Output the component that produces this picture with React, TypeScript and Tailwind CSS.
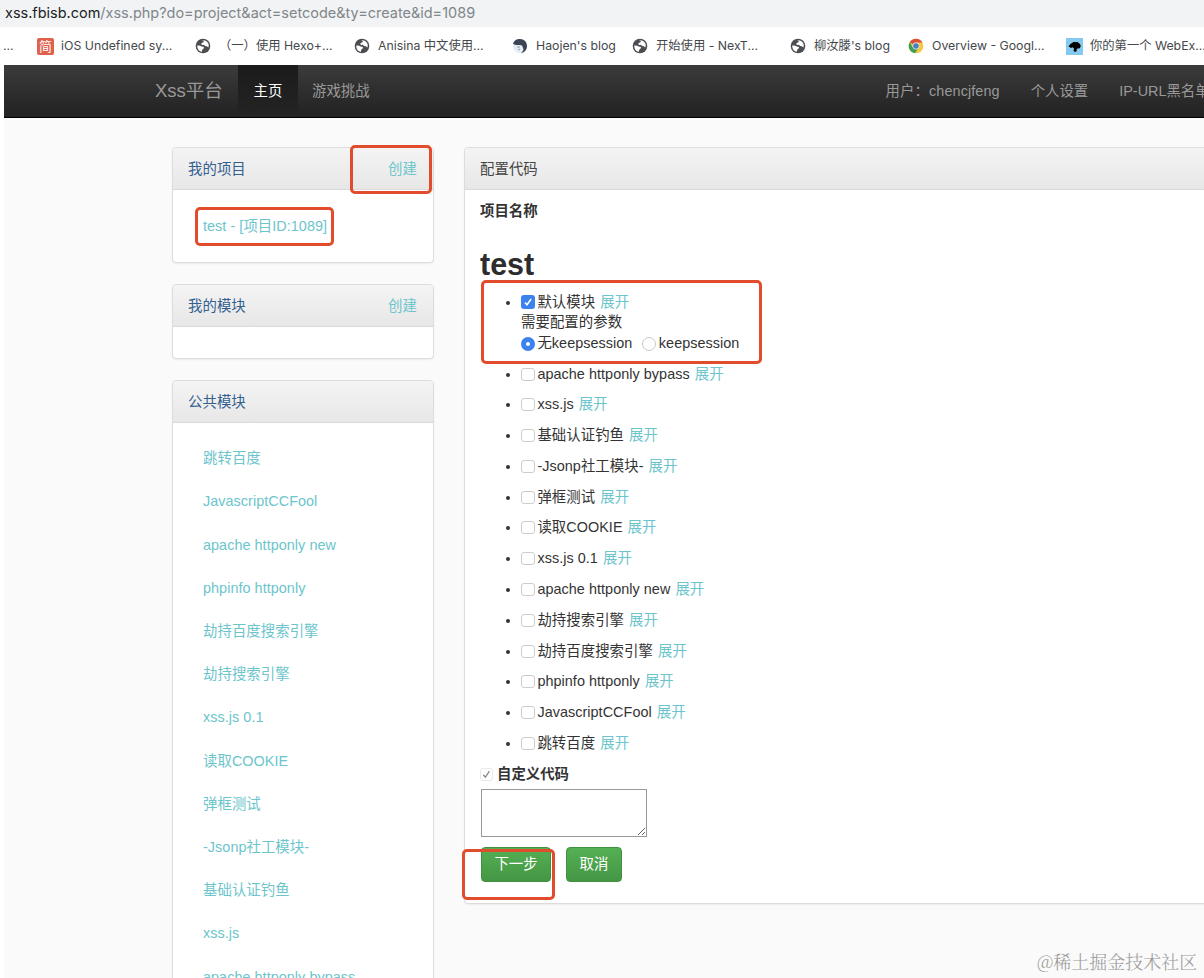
import type { ReactNode } from "react";
import clsx from "clsx";

interface Bookmark {
  title: string;
  icon: ReactNode;
  cell: string;
}

const bookmarks: Bookmark[] = [
  {
    title: "iOS Undefined sy...",
    icon: (
      <span className="flex h-[17px] w-[17px] items-center justify-center rounded-[2px] bg-[#e0604c] text-[13px] leading-none text-white">
        简
      </span>
    ),
    cell: "w-[158px]",
  },
  { title: "（一）使用 Hexo+...", icon: <GlobeIcon />, cell: "w-[159px]" },
  { title: "Anisina 中文使用...", icon: <GlobeIcon />, cell: "w-[158px]" },
  { title: "Haojen's blog", icon: <HaojenIcon />, cell: "w-[120px]" },
  { title: "开始使用 - NexT...", icon: <GlobeIcon />, cell: "w-[158px]" },
  { title: "柳汝滕's blog", icon: <GlobeIcon />, cell: "w-[118px]" },
  { title: "Overview - Googl...", icon: <ChromeIcon />, cell: "w-[158px]" },
  { title: "你的第一个 WebEx...", icon: <WebExIcon />, cell: "w-[138px]" },
];

const publicModules = [
  "跳转百度",
  "JavascriptCCFool",
  "apache httponly new",
  "phpinfo httponly",
  "劫持百度搜索引擎",
  "劫持搜索引擎",
  "xss.js 0.1",
  "读取COOKIE",
  "弹框测试",
  "-Jsonp社工模块-",
  "基础认证钓鱼",
  "xss.js",
  "apache httponly bypass",
];

const modules = [
  "apache httponly bypass",
  "xss.js",
  "基础认证钓鱼",
  "-Jsonp社工模块-",
  "弹框测试",
  "读取COOKIE",
  "xss.js 0.1",
  "apache httponly new",
  "劫持搜索引擎",
  "劫持百度搜索引擎",
  "phpinfo httponly",
  "JavascriptCCFool",
  "跳转百度",
];

function GlobeIcon() {
  return (
    <svg viewBox="0 0 16 16" className="mr-px h-4 w-4">
      <circle cx="8" cy="8" r="7.3" fill="#4b4d50" />
      <path d="M2.3 7.6c1.6-.2 3.2.2 4.2 1l1.7.2c1 .3 1 1.4.2 1.9l-1.2 1-.5 2.2C4 13.4 2 11 2.3 7.6z" fill="#fff" />
      <path d="M7 2.3c2.7-.5 5 .8 6.2 2.9.7 1.4.7 3 .2 4.4l-1.6-1.3-1.7-.2-1.2-1.3-1.8.2-1-1 1-1.3 1.5-.5.2-1.1z" fill="#fff" />
    </svg>
  );
}

function HaojenIcon() {
  return (
    <svg viewBox="0 0 16 16" className="mr-px h-4 w-4">
      <circle cx="8" cy="8" r="7" fill="#e6ecf3" />
      <path d="M1 6C2 2 5 1 8 1c4 0 7 3 7 7s-3 7-6 7c2-2 3-3 2-5-.5-2-1-3-3-3C5 7 3 7 1 6z" fill="#3a4654" />
      <path d="M5 9h3M6 11l2 1" stroke="#8d9aab" strokeWidth="1" />
    </svg>
  );
}

function ChromeIcon() {
  return (
    <svg viewBox="0 0 16 16" className="mr-px h-4 w-4">
      <circle cx="8" cy="8" r="7.3" fill="#f5c83b" />
      <path d="M8 8 1.7 4.3A7.3 7.3 0 0 1 14.4 4.5H8z" fill="#d9503f" />
      <path d="M1.7 4.3A7.3 7.3 0 0 0 7.2 15.3L10.6 9.6 8 8 5 9.7z" fill="#3f9f57" />
      <circle cx="8" cy="8" r="3.4" fill="#e8eef5" />
      <circle cx="8" cy="8" r="2.8" fill="#4a7fc4" />
    </svg>
  );
}

function WebExIcon() {
  return (
    <svg viewBox="0 0 17 17" className="h-[17px] w-[17px]">
      <rect width="17" height="17" fill="#86c9ee" />
      <path d="M2.5 8.3 4.5 6l3-2h4l2.5 2 .8 2-1 2.2-2 .2-1.2.6.2 2-1.8 1-1.5-1.2.5-2.2-1.5-1.4L5 10z" fill="#000" />
    </svg>
  );
}

function Check({ checked }: { checked?: boolean }) {
  return (
    <span
      className={clsx(
        "mr-[2.4px] inline-block rounded-[3px] align-[-2px]",
        checked ? "h-[14px] w-[14px] bg-[#3b82ee]" : "h-[13px] w-[14px] border border-[#cdcdcd] bg-white"
      )}
    >
      {checked && (
        <svg viewBox="0 0 14 14" className="block h-[14px] w-[14px]">
          <path d="M3.9 7.4 6 9.8l4.1-5.8" fill="none" stroke="#fff" strokeWidth="1.5" />
        </svg>
      )}
    </span>
  );
}

function Radio({ checked }: { checked?: boolean }) {
  return (
    <span
      className={clsx(
        "mr-[2.4px] inline-block h-[14px] w-[14px] rounded-full align-[-3px]",
        checked ? "border-5 border-[#3b82ee] bg-white" : "border border-[#c9c9c9] bg-white"
      )}
    />
  );
}

// red annotation frame drawn over the page
function Mark({ className }: { className: string }) {
  return <span className={clsx("pointer-events-none absolute rounded-[5px] border-3 border-[#e04c2c]", className)} />;
}

function Panel({ title, action, className, children }: {
  title: string;
  action?: ReactNode;
  className?: string;
  children?: ReactNode;
}) {
  return (
    <section className={clsx("rounded-[4px] border border-[#dcdcdc] bg-white shadow-[0_1px_2px_rgba(0,0,0,0.06)]", className)}>
      <header className="flex h-[42px] items-center justify-between rounded-t-[3px] border-b border-[#dadada] bg-linear-to-b from-[#f4f4f4] to-[#e7e7e7] pt-px pr-4 pl-[15px] text-[#33608f]">
        <span>{title}</span>
        {action}
      </header>
      {children}
    </section>
  );
}

function Bullet({ children }: { children: ReactNode }) {
  return (
    <li className="relative mb-[10.2px] pl-[41px] leading-[20.6px] whitespace-nowrap">
      <span className="absolute top-[9px] left-[26px] h-1 w-1 rounded-full bg-[#333]" />
      {children}
    </li>
  );
}

export default function App() {
  return (
    <div className="h-[978px] w-[1204px] overflow-hidden bg-white font-['Liberation_Sans','Noto_Sans_CJK_SC',sans-serif] text-[14.4px] leading-[20.6px] text-[#333]">
      <div className="flex h-[27px] items-center bg-[#f1f3f4] pl-[5px] font-[Inter,sans-serif] text-[14.47px] text-[#80868b]">
        <span className="text-[#202124]">xss.fbisb.com</span>/xss.php?do=project&amp;act=setcode&amp;ty=create&amp;id=1089
      </div>

      <div className="flex h-[38px] items-center font-[Inter,'Noto_Sans_CJK_SC',sans-serif] text-[12.3px] whitespace-nowrap text-[#45484b]">
        <span className="w-[37px] shrink-0 pl-[3px]">...</span>
        {bookmarks.map((b) => (
          <div key={b.title} className={clsx("flex shrink-0 items-center gap-[7px]", b.cell)}>
            <span className="flex w-[17px] shrink-0 justify-center">{b.icon}</span>
            <span>{b.title}</span>
          </div>
        ))}
      </div>

      <div className="ml-1 h-[913px] bg-[#fafafa]">
        <nav className="flex h-[53px] items-center border-b border-black bg-linear-to-b from-[#3b3b3b] to-[#222] whitespace-nowrap text-[#999]">
          <span className="w-[234px] shrink-0 pl-[151px] text-[18.5px]">Xss平台</span>
          <span className="flex h-full w-[60px] shrink-0 items-center justify-center bg-linear-to-b from-[#1b1b1b] to-[#242424] text-white">主页</span>
          <span className="ml-[14px]">游戏挑战</span>
          <span className="ml-[516px] tracking-[0.1px]">用户：chencjfeng</span>
          <span className="ml-[31px]">个人设置</span>
          <span className="ml-[31px]">IP-URL黑名单</span>
        </nav>

        <div className="flex items-start pt-[29px] pl-[168px] tracking-[0.05px]">
          <aside className="flex w-[262px] shrink-0 flex-col gap-[21px]">
            <Panel
              title="我的项目"
              className="relative h-[116px]"
              action={<span className="text-[#6cc5cc]">创建</span>}
            >
              <div className="pt-[26px] pl-[30px] text-[#6cc5cc]">test - [项目ID:1089]</div>
              <Mark className="-top-[3px] left-[177px] h-[49px] w-[82px]" />
              <Mark className="top-[59px] left-[22px] h-[39px] w-[139px]" />
            </Panel>
            <Panel title="我的模块" className="h-[75px]" action={<span className="text-[#6cc5cc]">创建</span>} />
            <Panel title="公共模块" className="h-[700px]">
              <ul className="flex flex-col pt-[14px] pl-[30px] text-[#6cc5cc]">
                {publicModules.map((name) => (
                  <li key={name} className="flex h-[43.2px] items-center">{name}</li>
                ))}
              </ul>
            </Panel>
          </aside>

          <main className="ml-[30px] w-[900px] shrink-0">
            <Panel title="配置代码" className="relative h-[757px] [&>header]:text-[#444]">
              <div className="px-[15px] pt-[11px]">
                <div className="font-bold tracking-normal">项目名称</div>
                <h3 className="mt-[20px] mb-[10px] h-[38px] text-[30.5px] leading-[44px] font-bold tracking-normal text-[#2d2d2d]">test</h3>
                <ul className="mt-[12px]">
                  <Bullet>
                    <div><Check checked />默认模块 <span className="ml-px text-[#6cc5cc]">展开</span></div>
                    <div>需要配置的参数</div>
                    <div><Radio checked />无keepsession <span className="ml-1.5"><Radio />keepsession</span></div>
                  </Bullet>
                  {modules.map((name) => (
                    <Bullet key={name}>
                      <Check />
                      {name} <span className="ml-px text-[#6cc5cc]">展开</span>
                    </Bullet>
                  ))}
                </ul>
                <div className="flex items-center gap-1 font-bold tracking-normal">
                  <span className="flex h-[13px] w-[13px] items-center justify-center rounded-[3px] border border-[#e9e9e9]">
                    <svg viewBox="0 0 13 13" className="h-[13px] w-[13px] shrink-0">
                      <path d="M3.2 6.8 5.4 9.2l4-6" fill="none" stroke="#8a8a8a" strokeWidth="1.3" />
                    </svg>
                  </span>
                  自定义代码
                </div>
                <textarea className="mt-[5px] ml-px block h-[48px] w-[166px] border border-[#999] bg-white" />
                <div className="mt-[10px] ml-px flex gap-[15px] tracking-normal text-white">
                  <button className="h-[35px] w-[70px] rounded-[4px] border border-[#41913f] bg-linear-to-b from-[#55b054] to-[#449644] pb-0.5">下一步</button>
                  <button className="h-[35px] w-[56px] rounded-[4px] border border-[#41913f] bg-linear-to-b from-[#55b054] to-[#449644] pb-0.5">取消</button>
                </div>
              </div>
              <Mark className="top-[132px] left-[16px] h-[84px] w-[281px]" />
              <Mark className="top-[701px] -left-[3px] h-[51px] w-[93px]" />
            </Panel>
          </main>
        </div>
      </div>

      <div className="absolute top-[949px] left-[1037px] font-['Noto_Serif_CJK_SC','Liberation_Serif','Noto_Sans_CJK_SC',serif] text-[18px] leading-6 font-light whitespace-nowrap text-[#999]">
        @稀土掘金技术社区
      </div>
    </div>
  );
}
